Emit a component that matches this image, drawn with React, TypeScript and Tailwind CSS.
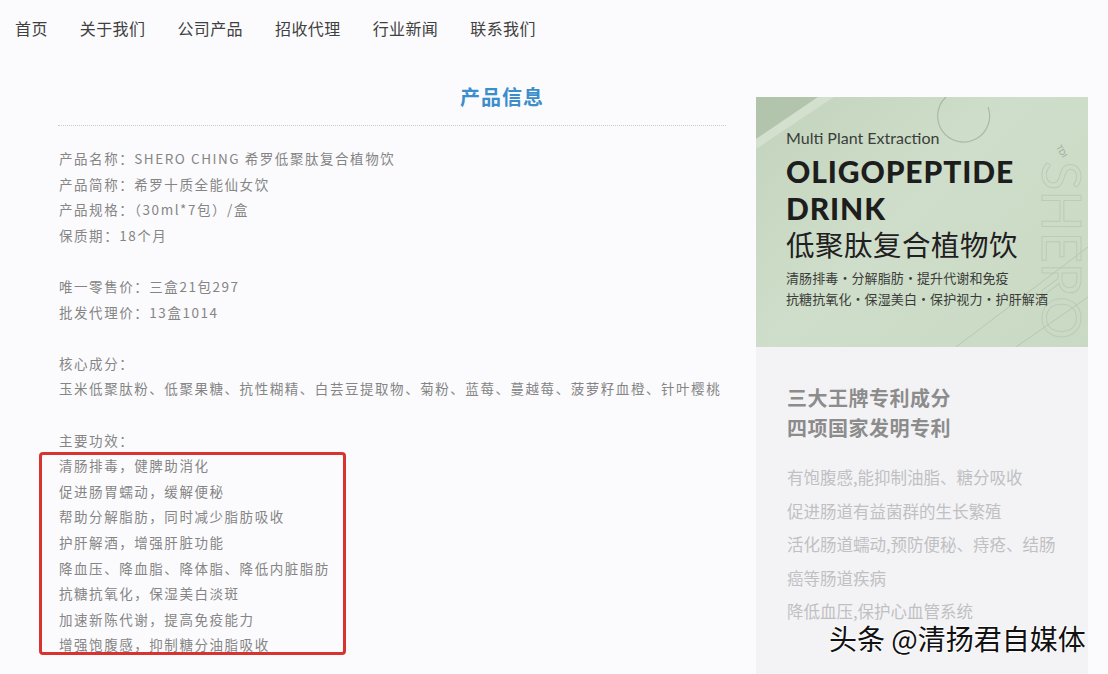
import React from "react";

const nav = ["首页", "关于我们", "公司产品", "招收代理", "行业新闻", "联系我们"];

const info1 = [
  "产品名称：SHERO CHING 希罗低聚肽复合植物饮",
  "产品简称：希罗十质全能仙女饮",
  "产品规格：（30ml*7包）/盒",
  "保质期：18个月",
];
const info2 = ["唯一零售价：三盒21包297", "批发代理价：13盒1014"];
const info3 = [
  "核心成分：",
  "玉米低聚肽粉、低聚果糖、抗性糊精、白芸豆提取物、菊粉、蓝莓、蔓越莓、菠萝籽血橙、针叶樱桃",
];
const effects = [
  "清肠排毒，健脾助消化",
  "促进肠胃蠕动，缓解便秘",
  "帮助分解脂肪，同时减少脂肪吸收",
  "护肝解酒，增强肝脏功能",
  "降血压、降血脂、降体脂、降低内脏脂肪",
  "抗糖抗氧化，保湿美白淡斑",
  "加速新陈代谢，提高免疫能力",
  "增强饱腹感，抑制糖分油脂吸收",
];
const panelLines = [
  "有饱腹感,能抑制油脂、糖分吸收",
  "促进肠道有益菌群的生长繁殖",
  "活化肠道蠕动,预防便秘、痔疮、结肠",
  "癌等肠道疾病",
  "降低血压,保护心血管系统",
];

const cjk = "font-['Noto_Sans_CJK_SC','Noto_Sans',sans-serif]";

function Line({ children }: { children: React.ReactNode }) {
  return <div className="h-[25.6px] leading-[25.6px] whitespace-nowrap">{children}</div>;
}

export default function App() {
  return (
    <div className={`relative w-[1108px] h-[674px] overflow-hidden bg-[#fbfbfd] ${cjk}`}>
      {/* nav */}
      <div className="flex h-[55px] items-center gap-[32px] pl-[15px] text-[16px] tracking-[0.4px] text-[#404040]">
        {nav.map((n) => (
          <span key={n}>{n}</span>
        ))}
      </div>

      <div className="flex">
        {/* left column */}
        <div className="ml-[58px] w-[668px]">
          <div className="mt-[28px] border-b border-dotted border-[#c9cdd3] pb-[14px] text-center">
            <span className="inline-block pl-[220px] text-[20px] font-bold leading-[28px] tracking-[1px] text-[#3b8dcc]">
              产品信息
            </span>
          </div>
          <div className="mt-[20px] pl-[1px] text-[13.5px] tracking-[1.55px] text-[#858585]">
            {info1.map((t) => (
              <Line key={t}>{t}</Line>
            ))}
            <Line>{""}</Line>
            {info2.map((t) => (
              <Line key={t}>{t}</Line>
            ))}
            <Line>{""}</Line>
            {info3.map((t) => (
              <Line key={t}>{t}</Line>
            ))}
            <Line>{""}</Line>
            <Line>主要功效：</Line>
            <div className="relative">
              {effects.map((t) => (
                <Line key={t}>{t}</Line>
              ))}
              <div className="absolute left-[-20px] top-[-1px] h-[203px] w-[307px] rounded-[4px] border-[3px] border-[#d9332f]" />
            </div>
          </div>
        </div>

        {/* right column */}
        <div className="ml-[30px] mt-[42px] w-[332px]">
          <div className="relative h-[250px] overflow-hidden bg-[linear-gradient(135deg,#c2d3bc_0%,#cfdeca_45%,#c9d9c3_100%)]">
            <svg className="absolute inset-0" width="332" height="250" viewBox="0 0 332 250">
              <polygon points="0,0 62,0 0,42" fill="#aebfa8" opacity="0.8" />
              <polygon points="62,0 78,0 0,52 0,42" fill="#d8e4d3" opacity="0.7" />
              <path d="M190 0 A 26 26 0 1 0 232 10" fill="none" stroke="#aab9a6" strokeWidth="1.2" />
              <text
                x="0"
                y="0"
                transform="translate(286 64) rotate(90)"
                fontFamily="Lato, sans-serif"
                fontSize="54"
                fill="none"
                stroke="#bccbb7"
                strokeWidth="1"
              >
                SHERO
              </text>
              <text
                x="0"
                y="0"
                transform="translate(300 50) rotate(60)"
                fontFamily="Lato, sans-serif"
                fontSize="8"
                fill="#9aa996"
              >
                TDI
              </text>
              <line x1="200" y1="250" x2="332" y2="150" stroke="#b8c7b3" strokeWidth="1" />
              <line x1="260" y1="250" x2="332" y2="200" stroke="#b8c7b3" strokeWidth="1" />
            </svg>
            <div className="relative pl-[30px] pt-[31px]">
              <div className="font-['Lato','Noto_Sans',sans-serif] text-[16px] leading-[20px] text-[#3a3d39]">
                Multi Plant Extraction
              </div>
              <div className="mt-[5px] font-['Lato','Noto_Sans',sans-serif] text-[30px] font-black leading-[37px] tracking-[0.9px] text-[#1c1d1c]">
                OLIGOPEPTIDE
                <br />
                DRINK
              </div>
              <div className="text-[28.5px] leading-[34px] tracking-[0.5px] text-[#1f201f]">
                低聚肽复合植物饮
              </div>
              <div className="mt-[6px] text-[13px] leading-[21px] tracking-[0.1px] text-[#3a3c39]">
                清肠排毒·分解脂肪·提升代谢和免疫
                <br />
                抗糖抗氧化·保湿美白·保护视力·护肝解酒
              </div>
            </div>
          </div>
          <div className="h-[340px] bg-[#f3f3f6] pl-[31px] pt-[36px]">
            <div className="text-[20px] font-bold leading-[30px] tracking-[0.5px] text-[#8c8c8c]">
              三大王牌专利成分
              <br />
              四项国家发明专利
            </div>
            <div className="mt-[18px] text-[16.5px] leading-[33.5px] text-[#c0c0c2]">
              {panelLines.map((t) => (
                <div key={t} className="whitespace-nowrap">
                  {t}
                </div>
              ))}
            </div>
          </div>
        </div>
      </div>

      {/* watermark overlay */}
      <div className="absolute left-[829px] top-[620px] whitespace-nowrap text-[28px] leading-[36px] text-[#111] [text-shadow:0_0_2px_#fff,0_0_2px_#fff,0_0_3px_#fff]">
        头条 @清扬君自媒体
      </div>
    </div>
  );
}
